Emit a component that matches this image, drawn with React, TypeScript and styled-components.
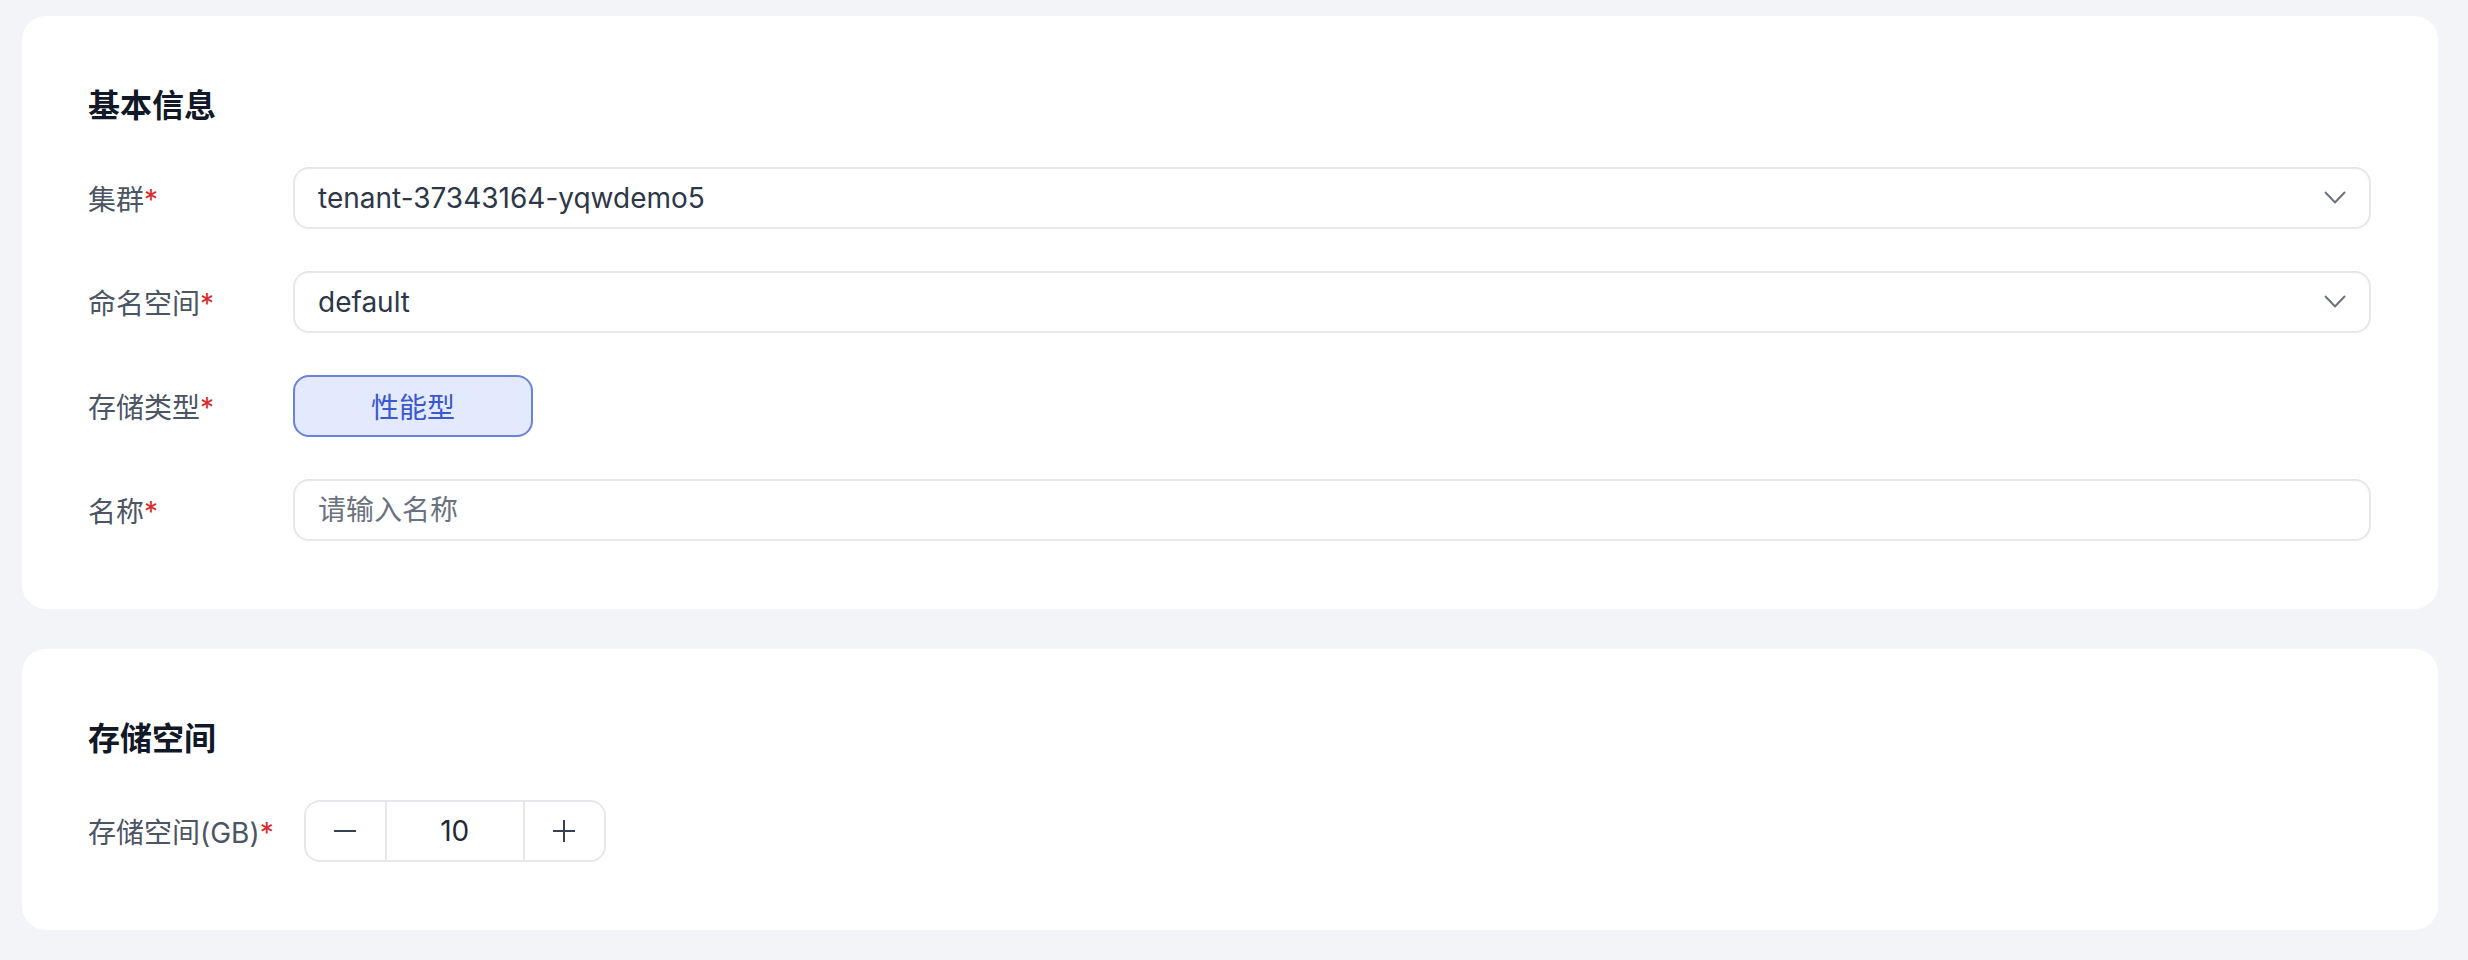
import styled, { createGlobalStyle } from "styled-components";

const GlobalStyle = createGlobalStyle`
    body {
        margin: 0;
        background: #f3f4f7;
        font-family: Inter, "Noto Sans CJK SC", sans-serif;
    }
`;

type FieldProps = {
    label: string;
    children: React.ReactNode;
}

function Field({ label, children }: FieldProps) {
    return (
        <Row>
            <Label>
                {label}
                <Required>*</Required>
            </Label>
            {children}
        </Row>
    );
}

function ChevronDown() {
    return (
        <svg width="22" height="14" viewBox="0 0 22 14" fill="none">
            <polyline points="1.5,1.5 11,11.5 20.5,1.5" stroke="#6b7280" strokeWidth="2" strokeLinecap="round" strokeLinejoin="round" />
        </svg>
    );
}

function MinusIcon() {
    return (
        <svg width="24" height="24" viewBox="0 0 24 24" fill="none">
            <line x1="1" y1="12" x2="23" y2="12" stroke="#374151" strokeWidth="2" />
        </svg>
    );
}

function PlusIcon() {
    return (
        <svg width="24" height="24" viewBox="0 0 24 24" fill="none">
            <line x1="1" y1="12" x2="23" y2="12" stroke="#374151" strokeWidth="2" />
            <line x1="12" y1="1" x2="12" y2="23" stroke="#374151" strokeWidth="2" />
        </svg>
    );
}

function App() {
    return (
        <Page>
            <GlobalStyle />
            <Card>
                <SectionTitle>基本信息</SectionTitle>
                <Rows>
                    <Field label="集群">
                        <Select>
                            <SelectValue>tenant-37343164-yqwdemo5</SelectValue>
                            <ChevronDown />
                        </Select>
                    </Field>
                    <Field label="命名空间">
                        <Select>
                            <SelectValue>default</SelectValue>
                            <ChevronDown />
                        </Select>
                    </Field>
                    <Field label="存储类型">
                        <TypeOption $active>性能型</TypeOption>
                    </Field>
                    <Field label="名称">
                        <TextInput placeholder="请输入名称" />
                    </Field>
                </Rows>
            </Card>
            <Card>
                <SectionTitle>存储空间</SectionTitle>
                <Rows>
                    <Field label="存储空间(GB)">
                        <Stepper>
                            <StepButton><MinusIcon /></StepButton>
                            <StepValue>10</StepValue>
                            <StepButton><PlusIcon /></StepButton>
                        </Stepper>
                    </Field>
                </Rows>
            </Card>
        </Page>
    );
}

const Page = styled.div`
    display: flex;
    flex-direction: column;
    gap: 40px;
    padding: 16px 30px 30px 22px;
`;

const Card = styled.section`
    background: #ffffff;
    border-radius: 24px;
    padding: 66px 67px 68px 66px;
`;

const SectionTitle = styled.h2`
    margin: 0 0 37px;
    font-size: 32px;
    line-height: 48px;
    font-weight: 600;
    color: #111827;
`;

const Rows = styled.div`
    display: flex;
    flex-direction: column;
    gap: 42px;
`;

const Row = styled.div`
    display: flex;
    align-items: center;
    gap: 30px;
    height: 62px;
`;

const Label = styled.label`
    flex: none;
    min-width: 175px;
    font-size: 28px;
    color: #4b5563;
    white-space: nowrap;
`;

const Required = styled.span`
    color: #d92d2d;
`;

const Select = styled.div`
    flex: 1;
    height: 62px;
    box-sizing: border-box;
    display: flex;
    align-items: center;
    justify-content: space-between;
    padding: 0 23px 0 23px;
    border: 2px solid #e5e7eb;
    border-radius: 16px;
    background: #ffffff;
`;

const SelectValue = styled.span`
    font-size: 28px;
    color: #2d3748;
`;

const TypeOption = styled.button<{ $active?: boolean }>`
    width: 240px;
    height: 62px;
    box-sizing: border-box;
    border-radius: 16px;
    border: 2px solid ${p => (p.$active ? "#6a82d8" : "#e5e7eb")};
    background: ${p => (p.$active ? "#e3eafd" : "#ffffff")};
    color: ${p => (p.$active ? "#3b58cf" : "#374151")};
    font-family: inherit;
    font-size: 28px;
    cursor: pointer;
`;

const TextInput = styled.input`
    flex: 1;
    height: 62px;
    box-sizing: border-box;
    padding: 0 23px;
    border: 2px solid #e5e7eb;
    border-radius: 16px;
    font-family: inherit;
    font-size: 28px;
    color: #2d3748;
    outline: none;

    &::placeholder {
        color: #6b7280;
    }
`;

const Stepper = styled.div`
    display: flex;
    height: 62px;
    box-sizing: border-box;
    border: 2px solid #e5e7eb;
    border-radius: 16px;
    overflow: hidden;
`;

const StepButton = styled.button`
    width: 79px;
    border: none;
    background: #ffffff;
    display: flex;
    align-items: center;
    justify-content: center;
    cursor: pointer;
    padding: 0;
`;

const StepValue = styled.div`
    width: 136px;
    display: flex;
    align-items: center;
    justify-content: center;
    border-left: 2px solid #e5e7eb;
    border-right: 2px solid #e5e7eb;
    font-size: 28px;
    color: #1f2937;
`;

export default App;
